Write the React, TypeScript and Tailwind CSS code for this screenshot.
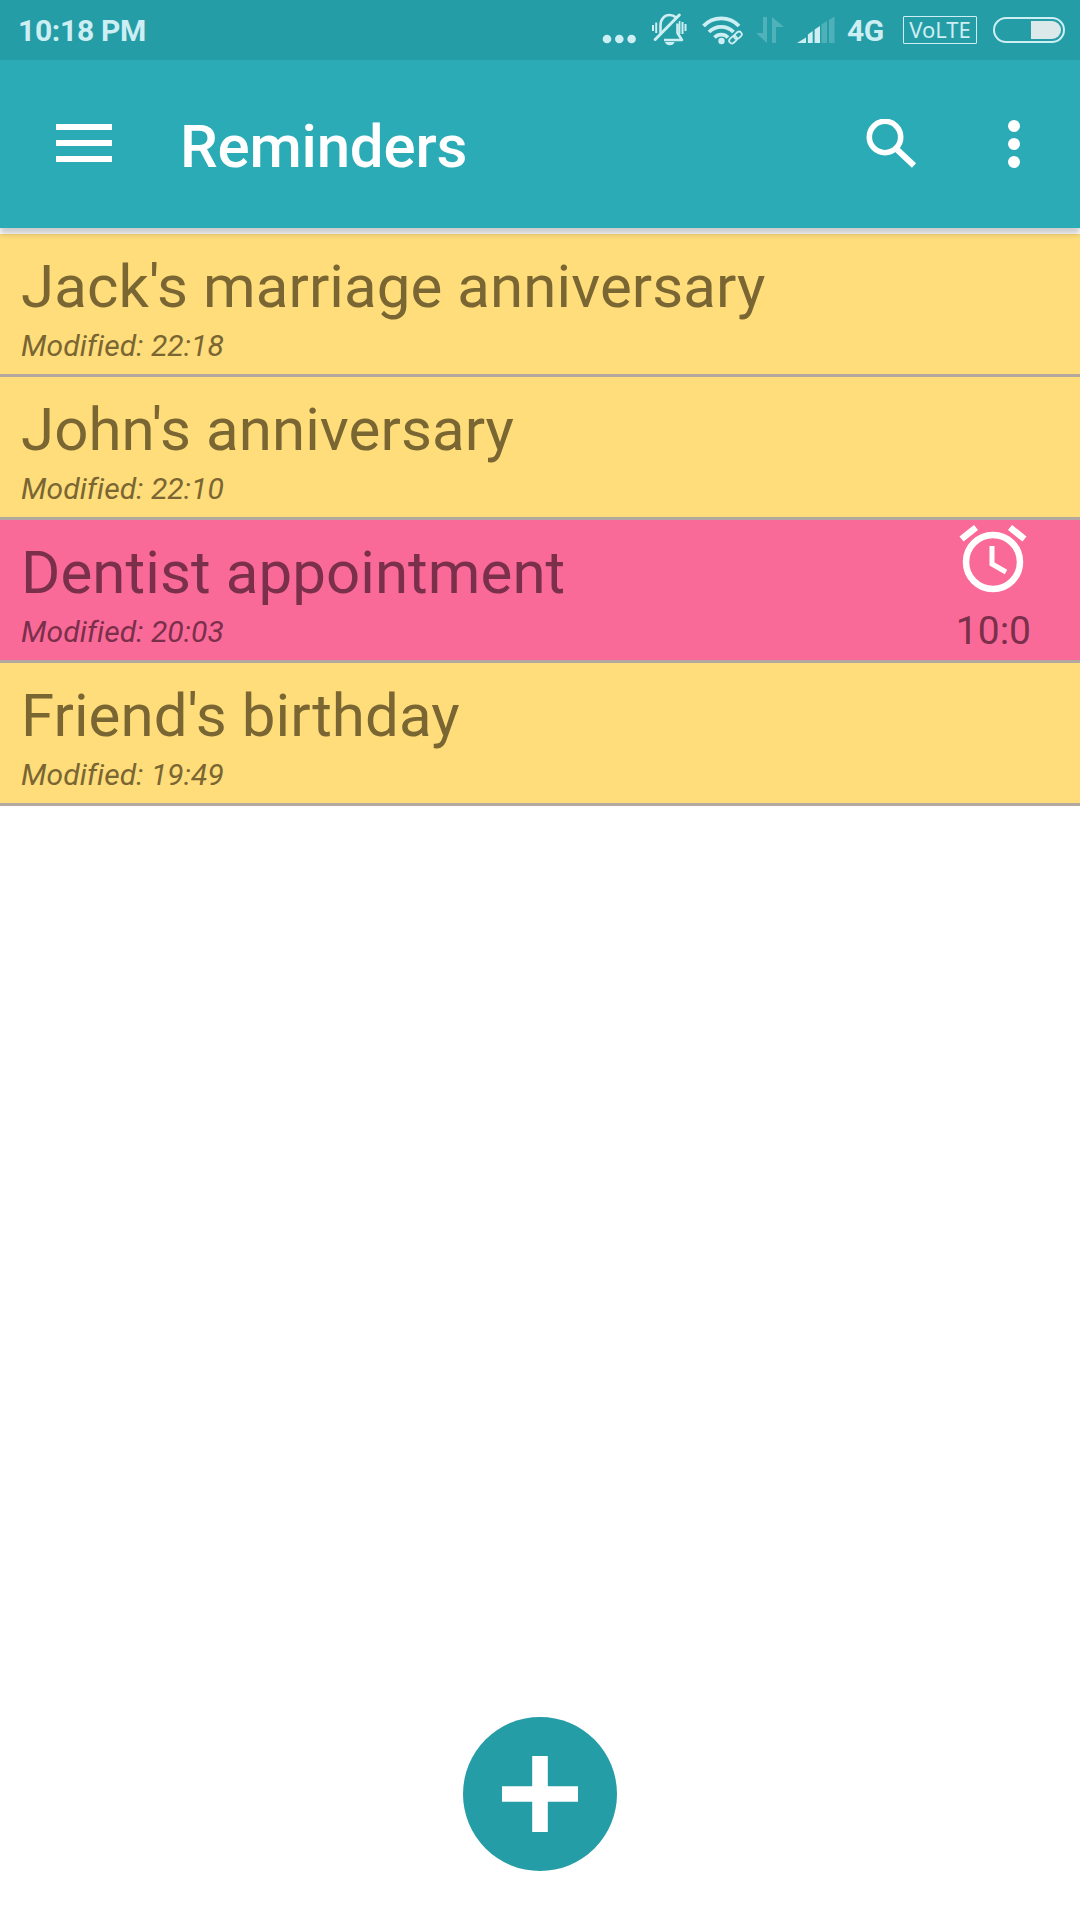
type Reminder = {
  id: number
  title: string
  modified: string
  alarm?: string
}

const reminders: Reminder[] = [
  { id: 1, title: "Jack's marriage anniversary", modified: '22:18' },
  { id: 2, title: "John's anniversary", modified: '22:10' },
  { id: 3, title: 'Dentist appointment', modified: '20:03', alarm: '10:0' },
  { id: 4, title: "Friend's birthday", modified: '19:49' },
]

function SilentBellIcon() {
  return (
    <svg width="36" height="34" viewBox="0 0 36 34" fill="none" stroke="currentColor" strokeWidth="2.6">
      <path d="M8.500 20v-7.500C8.500 6 12.500 2 17.500 2c2.500 0 4.700.8 6.200 2.200" />
      <path d="M25.500 10.500V20l4.500 7H12" strokeLinejoin="round" />
      <path d="M3.200 26.500L27.300 2" strokeWidth="3" strokeLinecap="round" />
      <path d="M1 12v6M4.200 9.500v10.500M30.500 9v12M33.500 11v7" strokeWidth="2" />
      <path d="M27.600 8v13" strokeWidth="1.6" />
      <path d="M13 29h9.500c-.6 2.200-2.500 3.200-4.700 3.200S13.600 31.200 13 29z" fill="currentColor" stroke="none" />
    </svg>
  )
}

function WifiLinkIcon() {
  return (
    <svg width="42" height="30" viewBox="0 0 42 30" fill="none" stroke="currentColor">
      <path d="M1.500 11a24.500 24.500 0 0 1 35.500 0" strokeWidth="3.800" />
      <path d="M7 17a17 17 0 0 1 24.500 0" strokeWidth="3.800" />
      <path d="M12.500 22.500a9.500 9.500 0 0 1 13.500 0" strokeWidth="3.800" />
      <circle cx="19.500" cy="26" r="3.200" fill="currentColor" stroke="none" />
      <g transform="rotate(-42 33.500 22.500)" strokeWidth="1.800">
        <rect x="26" y="19.800" width="8.500" height="5.400" rx="2.700" />
        <rect x="32.500" y="19.800" width="8.500" height="5.400" rx="2.700" />
      </g>
    </svg>
  )
}

function DataArrowsIcon() {
  return (
    <svg width="28" height="28" viewBox="0 0 28 28" fill="currentColor" className="opacity-25">
      <path d="M7 1h4v26L0 17h7z" />
      <path d="M16 27V1l12 10h-8v16z" />
    </svg>
  )
}

function SignalIcon() {
  return (
    <svg width="40" height="28" viewBox="0 0 40 28" fill="currentColor">
      <path d="M1 27l9-5.500v5.500z" />
      <path d="M11.900 27v-8.500l4.800-3.500v12z" />
      <path d="M18.600 27V13.500l5.400-3.500v17z" />
      <path d="M25.500 27V8.500l5.500-3.500v22z" opacity="0.25" />
      <path d="M33 27V4l5.500-3.500V27z" opacity="0.25" />
    </svg>
  )
}

function BatteryIcon() {
  return (
    <svg width="72" height="28" viewBox="0 0 72 28" fill="none">
      <rect x="1" y="2" width="70" height="24" rx="12" stroke="currentColor" strokeWidth="2" />
      <path d="M38 5h21a9 9 0 0 1 0 18H38z" fill="#dbe9ea" />
    </svg>
  )
}

function StatusBar() {
  return (
    <header className="flex h-[60px] items-center bg-[#259da7] pl-[18px] pr-[15px] text-[#cdeef2]">
      <span className="flex-1 text-[30px] font-bold leading-[35px] tracking-[-0.3px]">10:18 PM</span>
      <svg width="34" height="30" viewBox="0 0 34 30" fill="currentColor">
        <circle cx="5" cy="24" r="4.300" />
        <circle cx="17.300" cy="24" r="4.300" />
        <circle cx="29.600" cy="24" r="4.300" />
      </svg>
      <div className="ml-4">
        <SilentBellIcon />
      </div>
      <div className="ml-[14px]">
        <WifiLinkIcon />
      </div>
      <div className="ml-3">
        <DataArrowsIcon />
      </div>
      <div className="ml-3">
        <SignalIcon />
      </div>
      <span className="ml-[11px] text-[30px] font-bold leading-[35px] tracking-[-0.3px]">4G</span>
      <span className="ml-[19px] flex h-7 w-[74px] items-center justify-center rounded-[1px] border border-current pb-0.5 font-['Noto_Sans'] text-[22px] leading-none">
        VoLTE
      </span>
      <div className="ml-4">
        <BatteryIcon />
      </div>
    </header>
  )
}

function AppBar() {
  return (
    <div className="relative z-10 flex h-[168px] items-center bg-[#2aabb6] pl-14 pr-[60px] text-white shadow-[0_6px_6px_rgba(0,0,0,0.2)]">
      <button type="button" aria-label="Menu" className="mb-0.5 flex w-14 flex-col gap-[10px]">
        <span className="h-[6px] bg-white" />
        <span className="h-[6px] bg-white" />
        <span className="h-[6px] bg-white" />
      </button>
      <h1 className="ml-[68px] flex-1 pt-[6px] text-[60px] font-medium leading-[70px] tracking-[-0.2px]">
        Reminders
      </h1>
      <button type="button" aria-label="Search">
        <svg width="50" height="50" viewBox="0 0 50 50" fill="none" stroke="white">
          <circle cx="19" cy="18" r="15.700" strokeWidth="5.600" />
          <path d="M31.500 31L48 46.500" strokeWidth="6" />
        </svg>
      </button>
      <button type="button" aria-label="More options" className="ml-[92px] flex flex-col gap-[6px]">
        <span className="size-3 rounded-full bg-white" />
        <span className="size-3 rounded-full bg-white" />
        <span className="size-3 rounded-full bg-white" />
      </button>
    </div>
  )
}

function AlarmIcon() {
  return (
    <svg width="68" height="68" viewBox="0 0 68 68" fill="none" stroke="white">
      <circle cx="34" cy="37" r="27" strokeWidth="6.5" />
      <path d="M33 21v18l14 8" strokeWidth="5" />
      <path d="M2.500 14L17 2.500M51 2.500l14.500 11.500" strokeWidth="6.5" />
    </svg>
  )
}

function ReminderRow({ reminder }: { reminder: Reminder }) {
  return (
    <li
      className={`flex h-[143px] justify-between border-b-[3px] border-[#b3a8a0] pl-[21px] pr-[49px] ${
        reminder.alarm ? 'bg-[#fa6a99] text-[#7a2f4a]' : 'bg-[#ffdd7b] text-[#7a6632]'
      }`}
    >
      <div className="pt-[18px]">
        <div className="text-[60px] leading-[70px] tracking-[0.08px]">{reminder.title}</div>
        <div className="mt-[6px] text-[30px] italic leading-[35px] tracking-[0.08px]">
          Modified: {reminder.modified}
        </div>
      </div>
      {reminder.alarm && (
        <div className="flex flex-col items-center pt-[5px]">
          <AlarmIcon />
          <span className="mt-[15px] text-[39px] leading-[46px]">{reminder.alarm}</span>
        </div>
      )}
    </li>
  )
}

export default function App() {
  return (
    <div className="flex h-[1920px] w-[1080px] flex-col overflow-hidden bg-white font-[Roboto,sans-serif]">
      <StatusBar />
      <AppBar />
      <ul className="mt-[6px] flex-1">
        {reminders.map((reminder) => (
          <ReminderRow key={reminder.id} reminder={reminder} />
        ))}
      </ul>
      <div className="flex justify-center pb-[49px]">
        <button
          type="button"
          aria-label="Add reminder"
          className="flex size-[154px] items-center justify-center rounded-full bg-[#259da7]"
        >
          <svg width="76" height="76" viewBox="0 0 78 78" fill="white">
            <path d="M31 0h16v31h31v16H47v31H31V47H0V31h31z" />
          </svg>
        </button>
      </div>
    </div>
  )
}
